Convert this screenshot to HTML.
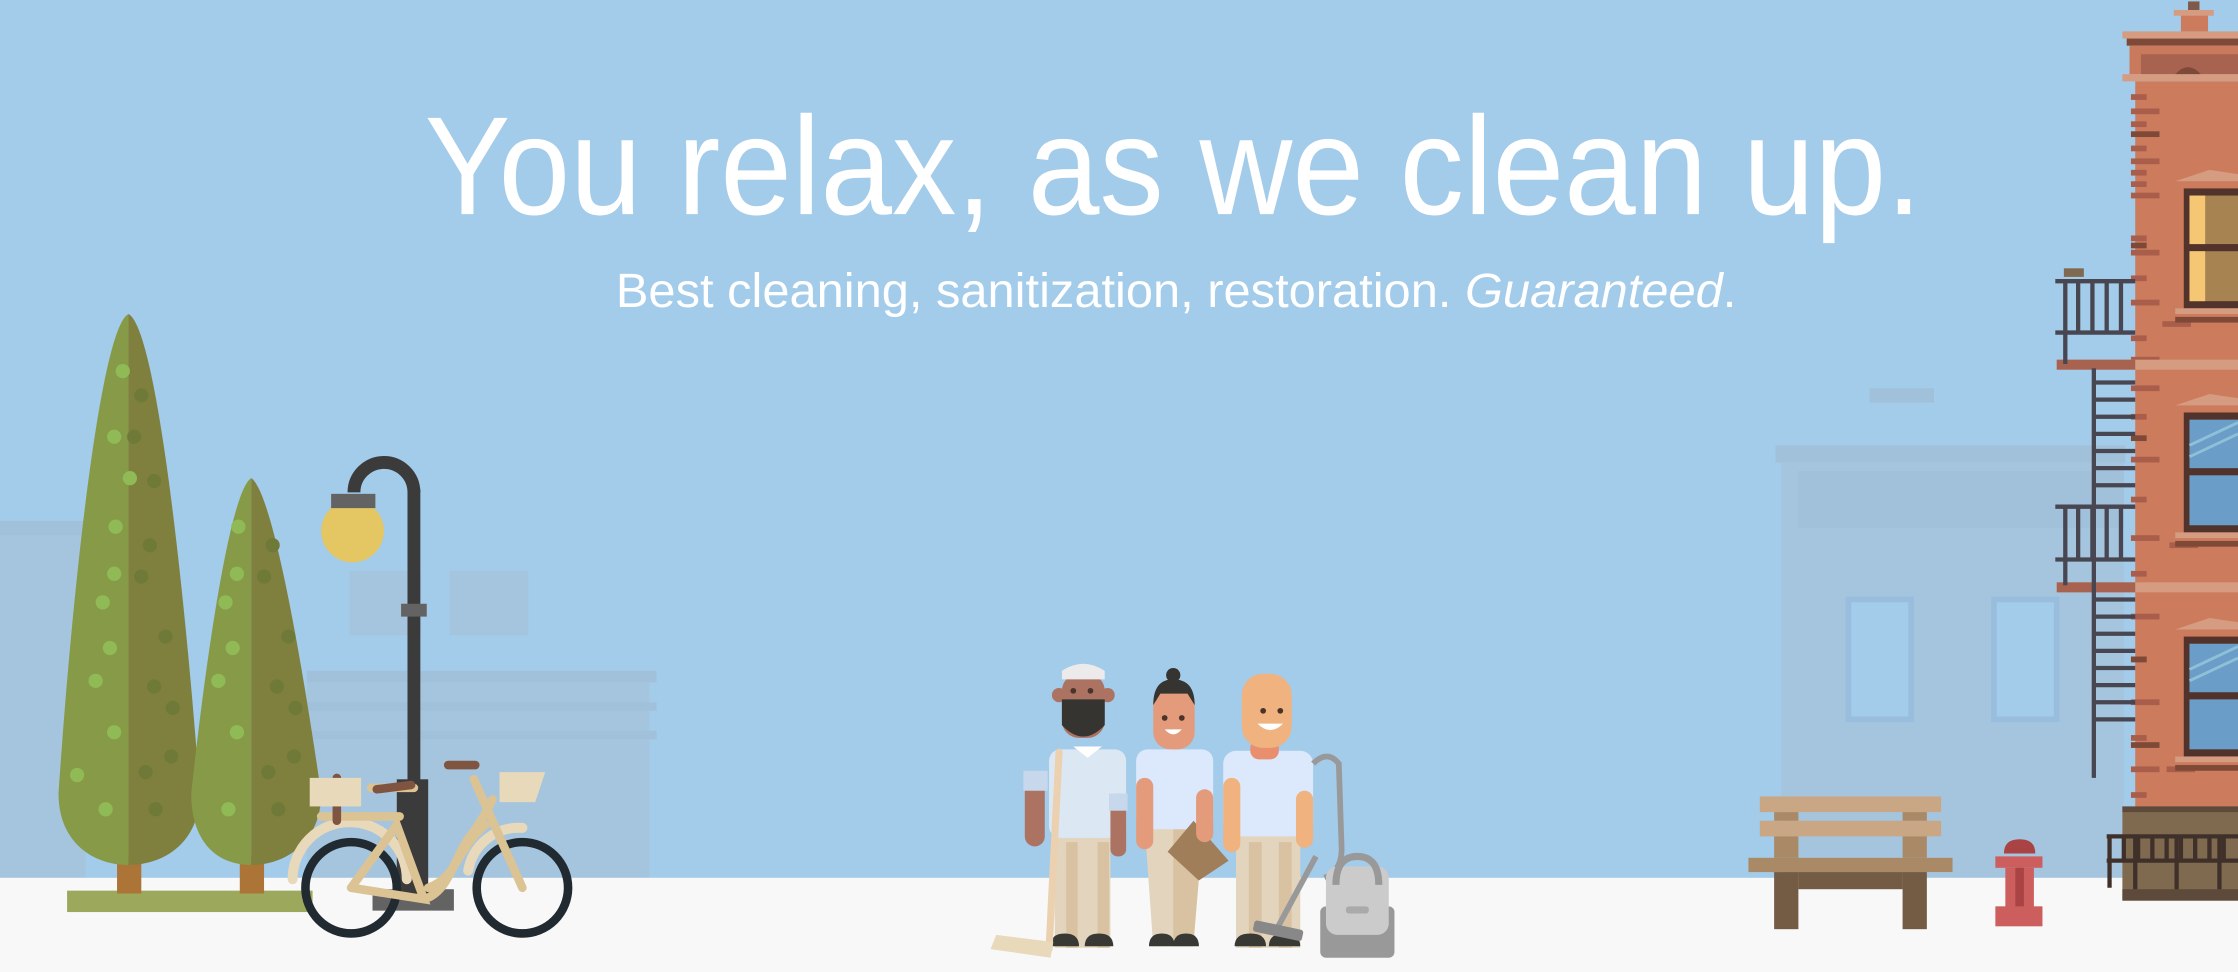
<!DOCTYPE html>
<html><head><meta charset="utf-8"><style>
html,body{margin:0;padding:0;width:2238px;height:972px;overflow:hidden;background:#a3cbea}
svg{display:block}
</style></head><body>
<svg width="2238" height="972" viewBox="0 0 1568 681" xmlns="http://www.w3.org/2000/svg">
<rect width="1568" height="681" fill="#a3cbea"/>
<!-- faded background buildings -->
<g opacity="0.45" fill="#a9bfd3">
<rect x="0" y="365" width="60" height="250"/>
<rect x="0" y="365" width="70" height="10" fill="#9fb5c9"/>
<rect x="215" y="475" width="240" height="140"/>
<rect x="215" y="470" width="245" height="8" fill="#9fb5c9"/>
<rect x="215" y="492" width="245" height="6" fill="#9fb5c9"/>
<rect x="215" y="512" width="245" height="6" fill="#9fb5c9"/>
<rect x="245" y="400" width="50" height="45"/>
<rect x="315" y="400" width="55" height="45"/>
<rect x="1248" y="318" width="240" height="297"/>
<rect x="1244" y="312" width="245" height="12" fill="#9fb5c9"/>
<rect x="1260" y="330" width="228" height="40" fill="#9fb5c9"/>
<rect x="1293" y="418" width="48" height="88" fill="#8fb0cf"/>
<rect x="1297" y="422" width="40" height="80" fill="#a3cbea"/>
<rect x="1395" y="418" width="48" height="88" fill="#8fb0cf"/>
<rect x="1399" y="422" width="40" height="80" fill="#a3cbea"/>
<rect x="1310" y="272" width="45" height="10" fill="#9fb5c9"/>
</g>
<!-- ground -->
<rect x="0" y="615" width="1568" height="66" fill="#f8f8f8"/>

<!-- text -->
<text x="822" y="150" text-anchor="middle" font-family="Liberation Sans, sans-serif" font-size="98" fill="#fff" textLength="1049" lengthAdjust="spacingAndGlyphs">You relax, as we clean up.</text>
<text x="824" y="215" text-anchor="middle" font-family="Liberation Sans, sans-serif" font-size="34" fill="#fff" textLength="785" lengthAdjust="spacingAndGlyphs">Best cleaning, sanitization, restoration. <tspan font-style="italic">Guaranteed</tspan>.</text>

<!-- trees -->
<rect x="47" y="624" width="172" height="15" fill="#9ca85c"/>
<rect x="82" y="600" width="17" height="26" fill="#ad7437"/>
<rect x="168" y="600" width="17" height="26" fill="#ad7437"/>
<path d="M90 220 C70 230 50 420 41 556 C41 590 65 606 90 606 Z" fill="#879a48"/>
<path d="M90 220 C110 230 130 420 140 556 C140 590 115 606 90 606 Z" fill="#7f803e"/>
<path d="M176 335 C160 345 142 480 134 556 C134 590 152 606 176 606 Z" fill="#879a48"/>
<path d="M176 335 C192 345 214 480 225 556 C225 590 200 606 176 606 Z" fill="#7f803e"/>
<g fill="#8fba55">
<circle cx="86" cy="260" r="5"/><circle cx="80" cy="306" r="5"/><circle cx="91" cy="335" r="5"/><circle cx="81" cy="369" r="5"/><circle cx="80" cy="402" r="5"/><circle cx="72" cy="422" r="5"/><circle cx="77" cy="454" r="5"/><circle cx="67" cy="477" r="5"/><circle cx="80" cy="513" r="5"/><circle cx="54" cy="543" r="5"/><circle cx="74" cy="567" r="5"/>
<circle cx="167" cy="369" r="5"/><circle cx="166" cy="402" r="5"/><circle cx="158" cy="422" r="5"/><circle cx="163" cy="454" r="5"/><circle cx="153" cy="477" r="5"/><circle cx="166" cy="513" r="5"/><circle cx="160" cy="567" r="5"/>
</g>
<g fill="#6f7a38">
<circle cx="99" cy="277" r="5"/><circle cx="94" cy="306" r="5"/><circle cx="108" cy="337" r="5"/><circle cx="105" cy="382" r="5"/><circle cx="99" cy="404" r="5"/><circle cx="116" cy="446" r="5"/><circle cx="108" cy="481" r="5"/><circle cx="121" cy="496" r="5"/><circle cx="120" cy="530" r="5"/><circle cx="102" cy="541" r="5"/><circle cx="109" cy="567" r="5"/>
<circle cx="191" cy="382" r="5"/><circle cx="185" cy="404" r="5"/><circle cx="202" cy="446" r="5"/><circle cx="194" cy="481" r="5"/><circle cx="207" cy="496" r="5"/><circle cx="206" cy="530" r="5"/><circle cx="188" cy="541" r="5"/><circle cx="195" cy="567" r="5"/>
</g>

<!-- lamp -->
<rect x="261" y="623" width="57" height="15" fill="#636363"/>
<rect x="278" y="546" width="22" height="82" fill="#3b3b3b"/>
<rect x="285.5" y="343" width="9" height="210" fill="#3b3b3b"/>
<path d="M290 345 A21 21 0 0 0 248 345" fill="none" stroke="#3b3b3b" stroke-width="9"/>
<rect x="281" y="423" width="18" height="9" fill="#636363"/>
<circle cx="247" cy="372" r="22" fill="#e4c663"/>
<rect x="232" y="346" width="31" height="10" fill="#636363"/>

<!-- bike -->
<g fill="none" stroke-linecap="round">
<path d="M205 616 A40 40 0 0 1 285 616" stroke="#e9d9bb" stroke-width="7"/>
<path d="M328 610 A36 36 0 0 1 366 580" stroke="#e9d9bb" stroke-width="7"/>
<circle cx="246" cy="622" r="32" stroke="#222a31" stroke-width="6"/>
<circle cx="366" cy="622" r="32" stroke="#222a31" stroke-width="6"/>
<path d="M246 622 L278 578 L297 630 L246 622 M297 630 C315 625 318 600 330 585 C340 572 345 560 345 560 M300 622 C320 615 320 595 340 578 M332 546 L366 622 M225 572 L280 572 M260 552 L290 552" stroke="#dbc394" stroke-width="6"/>
<path d="M264 553 L288 550 M314 536 L333 536 M236 545 L236 575" stroke="#7f5440" stroke-width="6"/>
</g>
<rect x="217" y="545" width="36" height="20" fill="#e9d9bb"/>
<path d="M350 541 L382 541 L375 562 L350 562 Z" fill="#e9d9bb"/>

<!-- people -->
<!-- person1 -->
<rect x="739" y="584" width="39" height="80" fill="#e2d4bd"/>
<rect x="747" y="590" width="8" height="74" fill="#d9c2a2"/><rect x="769" y="590" width="8" height="74" fill="#d9c2a2"/>
<path d="M736 663 q0 -9 10 -9 q10 0 10 9 Z M760 663 q0 -9 10 -9 q10 0 10 9 Z" fill="#383835"/>
<rect x="735" y="525" width="54" height="62" rx="8" fill="#dce7f4"/>
<rect x="718" y="545" width="14" height="48" rx="7" fill="#ac7262"/>
<rect x="778" y="556" width="11" height="44" rx="5" fill="#ac7262"/>
<rect x="717" y="540" width="17" height="14" fill="#c7d8ec"/>
<rect x="777" y="556" width="13" height="12" fill="#c7d8ec"/>
<path d="M752 523 l10 8 l10 -8 Z" fill="#fff"/>
<path d="M742 527 L735 665" stroke="#ebd1b0" stroke-width="5" stroke-linecap="round"/>
<path d="M698 655 L738 660 L736 671 L694 665 Z" fill="#e9d9bb"/>
<circle cx="742" cy="487" r="5" fill="#ac7262"/><circle cx="776" cy="487" r="5" fill="#ac7262"/>
<rect x="744" y="472" width="30" height="45" rx="12" fill="#ac7262"/>
<path d="M744 490 L774 490 L774 508 Q759 524 744 508 Z" fill="#353431"/>
<path d="M744 470 q15 -10 30 0 l0 6 l-30 0 Z" fill="#eceaea"/>
<circle cx="752" cy="484" r="2" fill="#4a3328"/><circle cx="764" cy="484" r="2" fill="#4a3328"/>
<!-- person2 -->
<path d="M802 579 L843 579 L836 663 L808 663 Z" fill="#e2d4bd"/>
<path d="M822 579 L843 579 L836 663 L822 663 Z" fill="#d9c2a2"/>
<path d="M805 663 q0 -9 9 -9 q9 0 9 9 Z M822 663 q0 -9 9 -9 q9 0 9 9 Z" fill="#383835"/>
<rect x="796" y="525" width="54" height="56" rx="8" fill="#dce8fc"/>
<rect x="796" y="545" width="12" height="50" rx="6" fill="#e39b7b"/>
<path d="M818 595 l20 -20 l22 30 l-22 12 Z" fill="#a07e5a" transform="rotate(-5 838 595)"/>
<rect x="838" y="553" width="12" height="37" rx="6" fill="#e39b7b"/>
<circle cx="822" cy="473" r="5" fill="#353431"/>
<rect x="808" y="480" width="29" height="45" rx="12" fill="#e39b7b"/>
<path d="M808 494 Q808 476 822 476 Q837 476 837 494 L832 486 L813 486 Z" fill="#353431"/>
<circle cx="816" cy="503" r="2" fill="#4a3328"/><circle cx="828" cy="503" r="2" fill="#4a3328"/>
<path d="M816 511 q6 7 12 0 Z" fill="#fff"/>
<!-- person3 -->
<rect x="866" y="584" width="45" height="80" fill="#e2d4bd"/>
<rect x="875" y="590" width="9" height="74" fill="#d9c2a2"/><rect x="896" y="590" width="9" height="74" fill="#d9c2a2"/>
<path d="M865 663 q0 -9 11 -9 q11 0 11 9 Z M889 663 q0 -9 11 -9 q11 0 11 9 Z" fill="#383835"/>
<rect x="857" y="526" width="63" height="60" rx="9" fill="#dce8fc"/>
<rect x="857" y="545" width="12" height="52" rx="6" fill="#f0b27e"/>
<rect x="908" y="554" width="12" height="40" rx="6" fill="#f0b27e"/>
<rect x="876" y="518" width="20" height="14" rx="6" fill="#e98f6d"/>
<rect x="870" y="472" width="35" height="52" rx="15" fill="#f0b27e"/>
<circle cx="885" cy="498" r="2" fill="#4a3328"/><circle cx="897" cy="498" r="2" fill="#4a3328"/>
<path d="M881 507 q9 9 18 0 Z" fill="#fff"/>
<!-- vacuum -->
<path d="M922 600 L895 650" stroke="#999" stroke-width="4"/>
<rect x="878" y="648" width="35" height="8" rx="2" fill="#888" transform="rotate(12 895 652)"/>
<path d="M920 535 q10 -10 18 0 L940 595 q0 15 -12 20" fill="none" stroke="#999" stroke-width="4"/>
<rect x="925" y="635" width="52" height="36" rx="4" fill="#999"/>
<rect x="929" y="607" width="44" height="48" rx="8" fill="#cbcbcb"/>
<path d="M936 620 q0 -20 15 -20 q15 0 15 20" fill="none" stroke="#999" stroke-width="5"/>
<rect x="943" y="635" width="16" height="5" rx="2" fill="#aaa"/>

<!-- bench -->
<rect x="1233" y="558" width="127" height="11" fill="#caa784"/>
<rect x="1233" y="575" width="127" height="11" fill="#caa784"/>
<rect x="1243" y="569" width="17" height="6" fill="#a98966"/><rect x="1333" y="569" width="17" height="6" fill="#a98966"/>
<rect x="1243" y="586" width="17" height="15" fill="#a98966"/><rect x="1333" y="586" width="17" height="15" fill="#a98966"/>
<rect x="1225" y="601" width="143" height="10" fill="#a98966"/>
<rect x="1243" y="611" width="17" height="40" fill="#745c44"/><rect x="1333" y="611" width="17" height="40" fill="#745c44"/>
<rect x="1260" y="611" width="73" height="12" fill="#745c44"/>
<!-- hydrant -->
<path d="M1404 598 q0 -10 11 -10 q11 0 11 10 Z" fill="#aa4444"/>
<rect x="1398" y="600" width="33" height="8" fill="#cc5e5e"/>
<rect x="1405" y="608" width="20" height="32" fill="#cc5e5e"/>
<rect x="1412" y="608" width="6" height="32" fill="#aa4444"/>
<rect x="1398" y="635" width="33" height="14" fill="#cc5e5e"/>

<!-- building -->
<rect x="1496" y="57" width="72" height="512" fill="#cc7b5c"/>
<rect x="1487" y="22" width="81" height="5" fill="#d59c82"/>
<rect x="1490" y="27" width="78" height="5" fill="#7f4937"/>
<rect x="1492" y="32" width="76" height="20" fill="#c97a5d"/>
<rect x="1500" y="38" width="68" height="14" fill="#a86250"/>
<path d="M1524 52 q9 -10 18 0 Z" fill="#7f4937"/>
<rect x="1487" y="52" width="81" height="5" fill="#d59c82"/>
<rect x="1528" y="10" width="19" height="12" fill="#cc7b5c"/>
<rect x="1523" y="7" width="28" height="4" fill="#d59c82"/>
<rect x="1533" y="1" width="8" height="6" fill="#7f5a4a"/>
<g fill="#a85e4b">
<rect x="1493" y="66" width="11" height="4"/><rect x="1493" y="76" width="20" height="4"/><rect x="1493" y="85" width="11" height="4"/><rect x="1493" y="102" width="11" height="4"/><rect x="1493" y="111" width="20" height="4"/><rect x="1493" y="119" width="11" height="4"/><rect x="1493" y="127" width="11" height="4"/><rect x="1493" y="135" width="20" height="4"/>
<rect x="1493" y="165" width="11" height="4"/><rect x="1493" y="175" width="20" height="4"/><rect x="1493" y="193" width="11" height="4"/><rect x="1493" y="210" width="20" height="4"/><rect x="1493" y="235" width="11" height="4"/><rect x="1493" y="250" width="20" height="4"/>
<rect x="1493" y="270" width="20" height="4"/><rect x="1493" y="290" width="11" height="4"/><rect x="1493" y="320" width="20" height="4"/><rect x="1493" y="348" width="11" height="4"/><rect x="1493" y="375" width="20" height="4"/><rect x="1493" y="400" width="11" height="4"/>
<rect x="1493" y="430" width="20" height="4"/><rect x="1493" y="460" width="11" height="4"/><rect x="1493" y="490" width="20" height="4"/><rect x="1493" y="515" width="11" height="4"/><rect x="1493" y="537" width="20" height="4"/><rect x="1493" y="555" width="11" height="4"/>
<rect x="1515" y="225" width="20" height="4"/><rect x="1520" y="380" width="20" height="4"/><rect x="1518" y="537" width="20" height="4"/>
</g>
<g fill="#7f4937"><rect x="1493" y="92" width="20" height="4"/><rect x="1493" y="170" width="11" height="4"/><rect x="1493" y="305" width="11" height="4"/><rect x="1493" y="460" width="11" height="4"/><rect x="1493" y="520" width="20" height="4"/></g>
<!-- floors -->
<rect x="1441" y="252" width="127" height="7" fill="#d59c82"/><rect x="1441" y="252" width="55" height="7" fill="#a86250"/>
<rect x="1441" y="408" width="127" height="7" fill="#d59c82"/><rect x="1441" y="408" width="55" height="7" fill="#a86250"/>
<!-- windows -->
<g>
<path d="M1524 127 l24 -8 l20 3 l0 5 Z" fill="#d59c82"/>
<rect x="1530" y="132" width="38" height="84" fill="#52332b"/>
<rect x="1534" y="137" width="34" height="34" fill="#a68350"/><rect x="1534" y="176" width="34" height="35" fill="#a68350"/>
<rect x="1534" y="137" width="11" height="34" fill="#f5c674"/><rect x="1534" y="176" width="11" height="35" fill="#f5c674"/>
<rect x="1524" y="216" width="44" height="4" fill="#d59c82"/><rect x="1524" y="222" width="44" height="4" fill="#7f4937"/>
<path d="M1524 284 l24 -8 l20 3 l0 5 Z" fill="#d59c82"/>
<rect x="1530" y="289" width="38" height="84" fill="#52332b"/>
<rect x="1534" y="294" width="34" height="34" fill="#6a9ec8"/><rect x="1534" y="333" width="34" height="35" fill="#6a9ec8"/>
<path d="M1534 312 l34 -16 M1534 320 l34 -16" stroke="#8ec0d8" stroke-width="2"/>
<rect x="1524" y="373" width="44" height="4" fill="#d59c82"/><rect x="1524" y="379" width="44" height="4" fill="#7f4937"/>
<path d="M1524 441 l24 -8 l20 3 l0 5 Z" fill="#d59c82"/>
<rect x="1530" y="446" width="38" height="84" fill="#52332b"/>
<rect x="1534" y="451" width="34" height="34" fill="#6a9ec8"/><rect x="1534" y="490" width="34" height="35" fill="#6a9ec8"/>
<path d="M1534 469 l34 -16 M1534 477 l34 -16" stroke="#8ec0d8" stroke-width="2"/>
<rect x="1524" y="530" width="44" height="4" fill="#d59c82"/><rect x="1524" y="536" width="44" height="4" fill="#7f4937"/>
</g>
<!-- base -->
<rect x="1487" y="565" width="81" height="66" fill="#7f6a50"/>
<rect x="1487" y="565" width="81" height="4" fill="#5e4a3a"/>
<rect x="1487" y="623" width="81" height="8" fill="#5e4a3a"/>
<g stroke="#3f302a" stroke-width="3" fill="none">
<path d="M1476 586 L1568 586 M1476 603 L1568 603 M1478 586 L1478 622"/>
<path d="M1488 586 v17 M1498 586 v17 M1508 586 v17 M1518 586 v17 M1528 586 v17 M1538 586 v17 M1548 586 v17 M1558 586 v17"/>
<path d="M1496 586 v37 M1525 586 v37 M1555 586 v37"/>
</g>
<!-- fire escape -->
<g stroke="#474651" stroke-width="3" fill="none">
<path d="M1440 197 L1496 197 M1440 233 L1496 233 M1447 197 L1447 255 M1456 197 v36 M1466 197 v36 M1476 197 v36 M1486 197 v36"/>
<path d="M1440 355 L1496 355 M1440 392 L1496 392 M1447 355 L1447 410 M1456 355 v37 M1466 355 v37 M1476 355 v37 M1486 355 v37"/>
<path d="M1467 258 L1467 545"/>
<path d="M1467 268 h29 M1467 280 h29 M1467 292 h29 M1467 304 h29 M1467 316 h29 M1467 328 h29 M1467 340 h29 M1467 420 h29 M1467 432 h29 M1467 444 h29 M1467 456 h29 M1467 468 h29 M1467 480 h29 M1467 492 h29 M1467 504 h29"/>
</g>
<rect x="1446" y="188" width="14" height="6" fill="#7f6a50"/>
</svg>
</body></html>
